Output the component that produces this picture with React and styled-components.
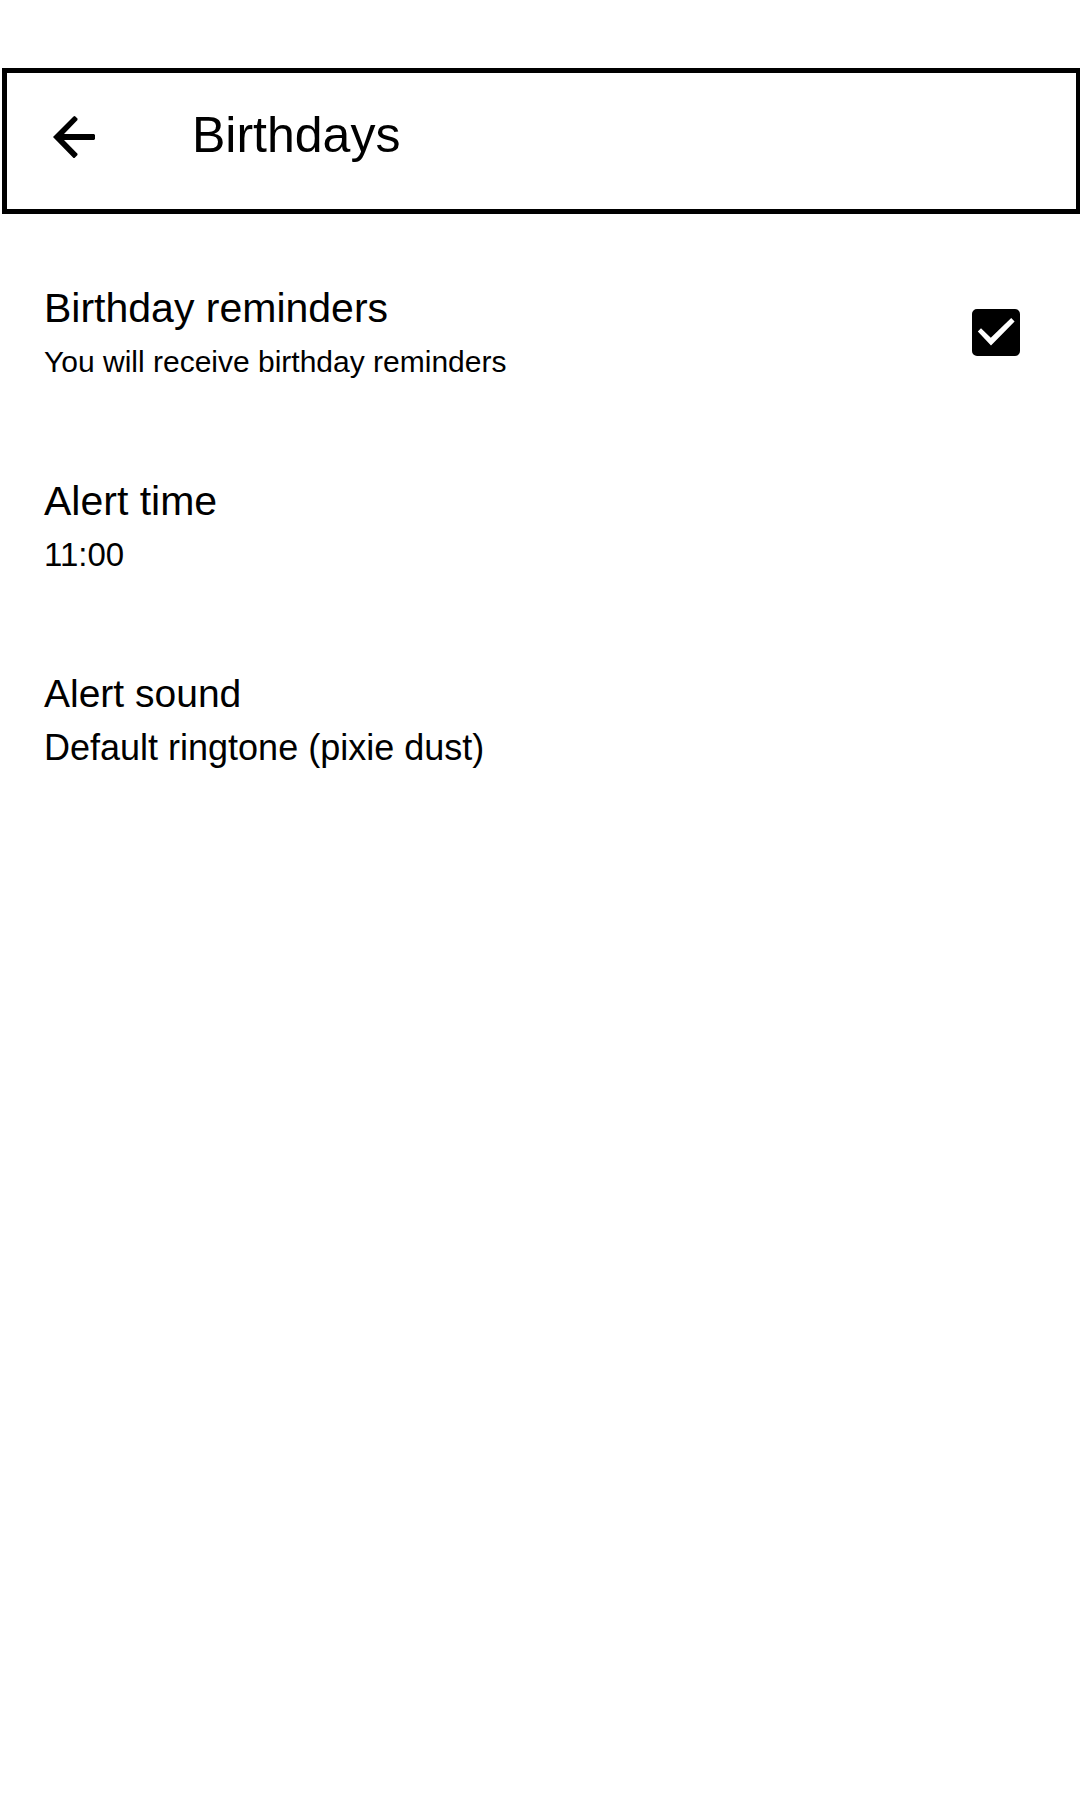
import React, { useState } from "react";
import styled, { createGlobalStyle } from "styled-components";

const GlobalStyle = createGlobalStyle`
  *, *::before, *::after {
    box-sizing: border-box;
  }
  body {
    margin: 0;
    background: #fff;
    color: #000;
    font-family: "Liberation Sans", Arial, Helvetica, sans-serif;
  }
`;

const Screen = styled.div`
  display: flex;
  flex-direction: column;
  gap: 68px;
  padding-top: 68px;
`;

const TopBar = styled.header`
  display: flex;
  align-items: flex-end;
  gap: 97px;
  margin-left: 2px;
  padding: 39px 46px 51px;
  border: 5px solid #000;
  border-right-width: 4px;
`;

const BackButton = styled.button`
  display: flex;
  padding: 0;
  border: 0;
  background: none;
  color: inherit;
  cursor: pointer;
`;

const Title = styled.h1`
  margin: 0;
  font-size: 50px;
  line-height: 46px;
  font-weight: 400;
`;

const Settings = styled.main`
  display: flex;
  flex-direction: column;
  gap: 87px;
  padding: 0 60px 0 44px;
`;

const Row = styled.section`
  display: flex;
  align-items: flex-start;
  justify-content: space-between;
`;

const RowText = styled.div`
  display: flex;
  flex-direction: column;
  gap: 2px;
`;

const Name = styled.h2`
  margin: 0;
  font-size: ${(p) => p.$size}px;
  line-height: 52px;
  font-weight: 400;
`;

const Detail = styled.p`
  margin: 0;
  font-size: ${(p) => p.$size}px;
  line-height: 52px;
`;

const CheckField = styled.span`
  display: grid;
  margin-top: 27px;

  > * {
    grid-area: 1 / 1;
  }
`;

const CheckInput = styled.input`
  appearance: none;
  width: 48px;
  height: 47px;
  margin: 0;
  border: 5px solid #000;
  border-radius: 5px;
  background: #fff;
  cursor: pointer;

  &:checked {
    background: #000;
  }
`;

const CheckMark = styled.svg`
  pointer-events: none;
`;

function BackArrow() {
  return (
    <svg width="42" height="42" viewBox="0 0 42 42" fill="currentColor" aria-hidden="true">
      <path d="M0 21 20.5 0.4 21.8 0 24.5 2.6V4L11 18H41L42 19V23L41 24H11L24.5 37.8V39L21.5 42H20.5Z" />
    </svg>
  );
}

function Checkbox({ id, checked, onChange }) {
  return (
    <CheckField>
      <CheckInput
        id={id}
        type="checkbox"
        checked={checked}
        onChange={(e) => onChange(e.target.checked)}
      />
      <CheckMark width="48" height="47" viewBox="0 0 48 47" aria-hidden="true">
        <path d="M5.8 22.5 9 19.2 18.8 28.8 39.2 9 42.6 12.6 19 36.4Z" fill="#fff" />
      </CheckMark>
    </CheckField>
  );
}

export default function App() {
  const [reminders, setReminders] = useState(true);

  return (
    <>
      <GlobalStyle />
      <Screen>
        <TopBar>
          <BackButton type="button" aria-label="Back">
            <BackArrow />
          </BackButton>
          <Title>Birthdays</Title>
        </TopBar>
        <Settings>
          <Row>
            <RowText>
              <Name $size={41}>
                <label htmlFor="reminders">Birthday reminders</label>
              </Name>
              <Detail $size={30}>You will receive birthday reminders</Detail>
            </RowText>
            <Checkbox id="reminders" checked={reminders} onChange={setReminders} />
          </Row>
          <Row>
            <RowText>
              <Name $size={41}>Alert time</Name>
              <Detail $size={33}>11:00</Detail>
            </RowText>
          </Row>
          <Row>
            <RowText>
              <Name $size={39}>Alert sound</Name>
              <Detail $size={36}>Default ringtone (pixie dust)</Detail>
            </RowText>
          </Row>
        </Settings>
      </Screen>
    </>
  );
}
